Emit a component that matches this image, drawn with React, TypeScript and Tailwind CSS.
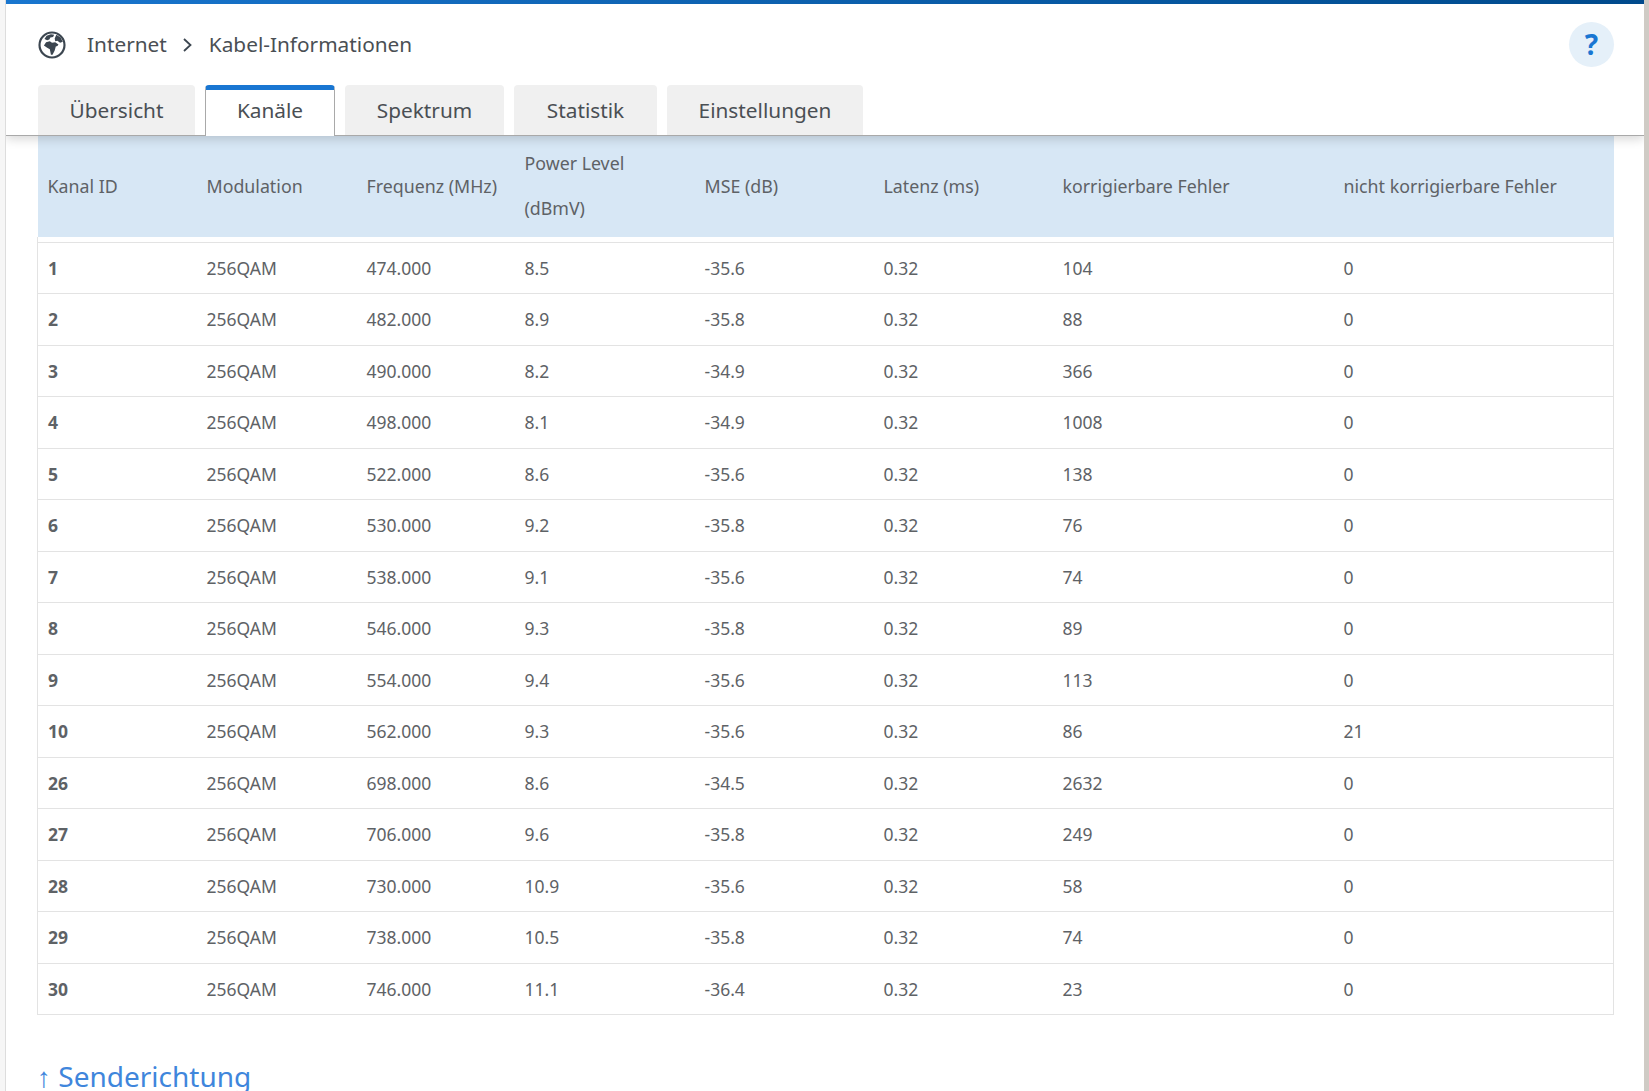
const rows: (string | number)[][] = [
  [1, "474.000", "8.5", "-35.6", 104, 0],
  [2, "482.000", "8.9", "-35.8", 88, 0],
  [3, "490.000", "8.2", "-34.9", 366, 0],
  [4, "498.000", "8.1", "-34.9", 1008, 0],
  [5, "522.000", "8.6", "-35.6", 138, 0],
  [6, "530.000", "9.2", "-35.8", 76, 0],
  [7, "538.000", "9.1", "-35.6", 74, 0],
  [8, "546.000", "9.3", "-35.8", 89, 0],
  [9, "554.000", "9.4", "-35.6", 113, 0],
  [10, "562.000", "9.3", "-35.6", 86, 21],
  [26, "698.000", "8.6", "-34.5", 2632, 0],
  [27, "706.000", "9.6", "-35.8", 249, 0],
  [28, "730.000", "10.9", "-35.6", 58, 0],
  [29, "738.000", "10.5", "-35.8", 74, 0],
  [30, "746.000", "11.1", "-36.4", 23, 0],
];

const tabs = ["Übersicht", "Kanäle", "Spektrum", "Statistik", "Einstellungen"];
const tabWidths = ["w-[157px]", "w-[130px]", "w-[159px]", "w-[143px]", "w-[196px]"];

function Globe() {
  return (
    <svg viewBox="0 0 26 26" className="w-[28px] h-[28px] text-[#3c4650]" fill="currentColor" aria-hidden="true">
      <circle cx="13" cy="13" r="11.6" fill="none" stroke="currentColor" strokeWidth="2" />
      <path d="M8 4.5 L12 3 L15 3.5 L14 5.5 L11.5 6 L10.5 8 L8.5 8.5 L6 7.5 Z" />
      <path d="M17 3.5 L21 6 L23 10 L20.5 11 L18 9 L16 9.5 L15.5 7 Z" />
      <path d="M7.5 10.5 L11 9.5 L13 11 L16 10.5 L19 12.5 L18 14 L16.5 14.5 L15.5 18 L13.5 22 L12 22 L11 17 L8.5 15.5 L5.5 13.5 Z" />
    </svg>
  );
}

export default function App() {
  return (
    <div className="flex h-screen overflow-hidden bg-white text-[#5e6266] font-['Noto_Sans',sans-serif]">
      <div className="w-[6px] shrink-0 bg-[#f6f6f6] border-r border-[#dddddd]" />
      <main className="flex-1 min-w-0 flex flex-col overflow-hidden">
        <header className="relative z-10 shrink-0 h-[136px] bg-white border-b border-[#a9a9a9] shadow-[0_3px_10px_rgba(0,0,0,0.16)]">
          <div className="h-1 bg-gradient-to-r from-[#1976cf] to-[#004a8c]" />
          <div className="h-[81px] pl-[32px] pr-[30px] flex items-center">
            <Globe />
            <span className="ml-[21px] text-[20.8px] text-[#4a4f54]">Internet</span>
            <svg viewBox="0 0 12 16" className="ml-[14px] w-[12px] h-[16px] text-[#3c4650]" fill="none" stroke="currentColor" strokeWidth="1.8" aria-hidden="true">
              <path d="M3 2 L9.5 8 L3 14" />
            </svg>
            <span className="ml-[16px] text-[20.8px] text-[#4a4f54]">Kabel-Informationen</span>
            <button className="ml-auto w-[45px] h-[45px] pb-[2px] rounded-full bg-[#e5f0f9] text-[#1976d2] text-[28px] font-bold flex items-center justify-center">?</button>
          </div>
          <nav className="flex gap-[10px] pl-[32px] h-[50px]">
            {tabs.map((t, i) =>
              i === 1 ? (
                <div key={t} className={`${tabWidths[i]} relative h-[51px] bg-white rounded-t-[4px] border-x border-[#a9a9a9] border-t-[5px] border-t-[#1976d2] flex items-center justify-center pb-[5px] text-[20.8px] text-[#4a4f54]`}>{t}</div>
              ) : (
                <div key={t} className={`${tabWidths[i]} h-[50px] pt-[2px] bg-[#f0f0f0] rounded-t-[4px] flex items-center justify-center text-[20.8px] text-[#4a4f54]`}>{t}</div>
              )
            )}
          </nav>
        </header>
        <div className="pl-[31px] pr-[30px]">
          <table className="w-[1576px] table-fixed border-collapse text-[17.5px]">
            <thead>
              <tr className="bg-[#d7e7f5] h-[101px] text-left text-[17.8px] leading-[45px]">
                <th className="w-[159px] pl-[10px] font-normal">Kanal ID</th>
                <th className="w-[159px] pl-[10px] font-normal">Modulation</th>
                <th className="w-[159px] pl-[11px] font-normal">Frequenz (MHz)</th>
                <th className="w-[179px] pl-[10px] pr-[30px] pb-[2px] font-normal">Power Level (dBmV)</th>
                <th className="w-[179px] pl-[11px] font-normal">MSE (dB)</th>
                <th className="w-[179px] pl-[11px] font-normal">Latenz (ms)</th>
                <th className="w-[281px] pl-[11px] font-normal">korrigierbare Fehler</th>
                <th className="w-[281px] pl-[11px] font-normal">nicht korrigierbare Fehler</th>
              </tr>
              <tr className="h-[5px] border-x border-[#e3e3e3]"><th colSpan={8} /></tr>
            </thead>
            <tbody>
              {rows.map((r) => (
                <tr key={String(r[0])} className="h-[51.5px] border border-[#e3e3e3]">
                  <td className="pl-[10px] font-bold">{r[0]}</td>
                  <td className="pl-[10px]">256QAM</td>
                  <td className="pl-[11px]">{r[1]}</td>
                  <td className="pl-[10px]">{r[2]}</td>
                  <td className="pl-[11px]">{r[3]}</td>
                  <td className="pl-[11px]">0.32</td>
                  <td className="pl-[11px]">{r[4]}</td>
                  <td className="pl-[11px]">{r[5]}</td>
                </tr>
              ))}
            </tbody>
          </table>
          <h2 className="mt-[41px] text-[28px] leading-[40px] text-[#3f86dc] font-normal">
            <span className="font-['Liberation_Sans',sans-serif]">↑</span> Senderichtung
          </h2>
        </div>
      </main>
      <div className="w-[5px] shrink-0 bg-[#cfcbc5]" />
    </div>
  );
}
